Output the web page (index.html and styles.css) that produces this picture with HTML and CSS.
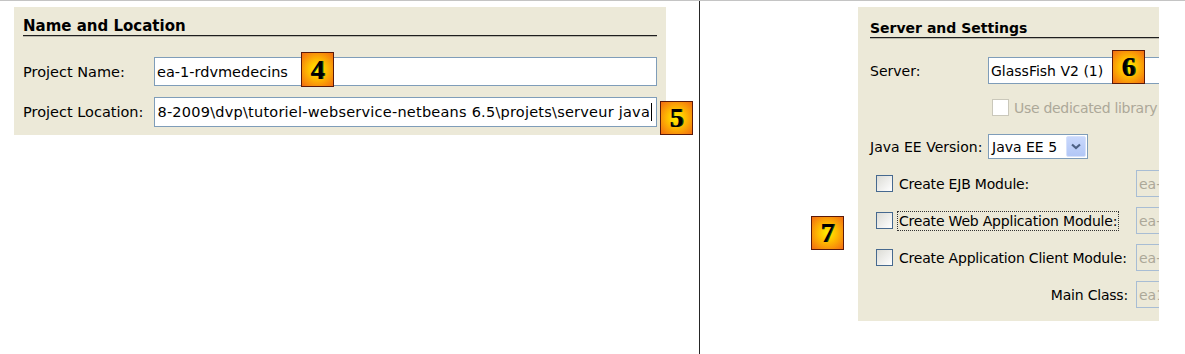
FILE: index.html
```html
<!DOCTYPE html>
<html lang="en">

<head>
    <meta charset="UTF-8">
    <title>New Enterprise Application</title>
    <link rel="stylesheet" href="styles.css">
</head>

<body>

    <div class="topline"></div>

    <div class="page">

        <div class="left">
            <!-- Name and Location -->
            <div class="panel name-panel">
                <div class="heading">Name and Location</div>

                <div class="row row-name">
                    <span class="label">Project Name:</span>
                    <div class="field">ea-1-rdvmedecins</div>
                </div>

                <div class="row row-location">
                    <span class="label">Project Location:</span>
                    <div class="field tail"><span class="path">8-2009\dvp\tutoriel-webservice-netbeans 6.5\projets\serveur java</span><span class="caret"></span></div>
                </div>

                <span class="badge b4">4</span>
                <span class="badge b5">5</span>
            </div>
        </div>

        <div class="divider"></div>

        <div class="right">
            <span class="badge b7">7</span>

            <!-- Server and Settings -->
            <div class="panel server-panel">
                <div class="heading">Server and Settings</div>

                <div class="row row-server">
                    <span class="label">Server:</span>
                    <div class="field wide">GlassFish V2 (1)</div>
                </div>

                <div class="row row-library">
                    <span class="check disabled"></span>
                    <span class="muted">Use dedicated library</span>
                </div>

                <div class="row row-version">
                    <span class="label">Java EE Version:</span>
                    <div class="combo">
                        <span>Java EE 5</span>
                        <span class="combo-btn">
                            <svg width="10" height="7" viewBox="0 0 10 7">
                                <path d="M1 1.5 L5 5 L9 1.5" fill="none" stroke="#4d6185" stroke-width="2.2"/>
                            </svg>
                        </span>
                    </div>
                </div>

                <div class="row module first">
                    <div class="mod"><span class="check"></span><span>Create EJB Module:</span></div>
                    <div class="field off">ea-1-rdvmedecins-ejb</div>
                </div>

                <div class="row module">
                    <div class="mod"><span class="check"></span><span class="focus">Create Web Application Module:</span></div>
                    <div class="field off">ea-1-rdvmedecins-war</div>
                </div>

                <div class="row module">
                    <div class="mod"><span class="check"></span><span>Create Application Client Module:</span></div>
                    <div class="field off">ea-1-rdvmedecins-app-client</div>
                </div>

                <div class="row module">
                    <div class="mod main"><span>Main Class:</span></div>
                    <div class="field off">ea1.Main</div>
                </div>

                <span class="badge b6">6</span>
            </div>
        </div>

    </div>

</body>

</html>
```

FILE: styles.css
```css
body {
    margin: 0;
    background-color: white;
    font-family: "DejaVu Sans", sans-serif;
    font-size: 14.5px;
    color: black;
}

.topline {
    height: 1px;
    background-color: #c4c4c4;
}

.page {
    display: flex;
    min-height: 353px;
}

.left {
    width: 685px;
    padding: 6px 0 0 14px;
}

.divider {
    width: 1px;
    background-color: #262626;
}

.right {
    position: relative;
    flex: 1;
    padding: 6px 0 0 158px;
}

/* panels */

.panel {
    position: relative;
    box-sizing: border-box;
    background-color: #ece9d8;
}

.name-panel {
    width: 652px;
    height: 128px;
    padding: 0 9px;
}

.server-panel {
    width: 301px;
    height: 314px;
    padding-left: 12px;
    overflow: hidden;
    font-size: 14px;
}

.heading {
    padding-top: 10px;
    line-height: 18px;
    font-weight: bold;
    font-size: 15px;
    border-bottom: 1px solid #1e1e1e;
    box-shadow: 0 1px 0 #b9b7aa;
}

.server-panel .heading {
    padding-top: 12px;
    font-size: 14px;
}

.row {
    display: flex;
    align-items: center;
    white-space: nowrap;
}

.label {
    flex: none;
}

.name-panel .label {
    width: 131px;
}

.server-panel .label {
    width: 118px;
}

.row-name {
    margin-top: 21px;
    height: 29px;
}

.row-location {
    margin-top: 11px;
    height: 30px;
}

.row-server {
    margin-top: 19px;
    height: 27px;
}

.row-library {
    margin-top: 15px;
    height: 17px;
    padding-left: 122px;
    gap: 5px;
}

.row-version {
    margin-top: 18px;
    height: 25px;
}

.module {
    margin-top: 9px;
    height: 27px;
}

.module.first {
    margin-top: 11px;
}

.module + .module {
    margin-top: 10px;
}

/* fields */

.field {
    box-sizing: border-box;
    height: 100%;
    flex: 1;
    display: flex;
    align-items: center;
    padding: 0 2px;
    background-color: white;
    border: 1px solid #7f9db9;
    overflow: hidden;
}

.field.tail {
    justify-content: flex-end;
    padding-right: 4px;
}

.path {
    letter-spacing: 0.23px;
}

.caret {
    width: 1px;
    height: 18px;
    margin-left: 1px;
    background-color: black;
}

.field.wide {
    flex: none;
    width: 220px;
}

.field.off {
    flex: none;
    width: 60px;
    background-color: #ece9d8;
    border-color: #a8bdd4;
    color: #aca899;
}

.muted {
    color: #aca899;
    letter-spacing: -0.3px;
}

.combo {
    box-sizing: border-box;
    width: 100px;
    height: 25px;
    display: flex;
    align-items: center;
    justify-content: space-between;
    padding: 0 1px 0 3px;
    background-color: white;
    border: 1px solid #7f9db9;
}

.combo-btn {
    box-sizing: border-box;
    width: 20px;
    height: 21px;
    display: flex;
    align-items: center;
    justify-content: center;
    border: 1px solid #d6e1fb;
    border-radius: 2px;
    background: linear-gradient(#c9d8fc, #b2c7f6);
}

/* checkboxes */

.mod {
    flex: none;
    box-sizing: border-box;
    width: 266px;
    display: flex;
    align-items: center;
    gap: 6px;
    padding-left: 6px;
    letter-spacing: -0.2px;
}

.mod.main {
    justify-content: flex-end;
    padding-right: 8px;
}

.check {
    flex: none;
    box-sizing: border-box;
    width: 17px;
    height: 17px;
    border: 1px solid #46698f;
    background: linear-gradient(135deg, #dcdcd6, #ffffff);
}

.check.disabled {
    border-color: #cac8bb;
    background: white;
}

.focus {
    outline: 1px dotted #333;
    outline-offset: 1px;
}

/* numbered markers */

.badge {
    position: absolute;
    box-sizing: border-box;
    width: 33px;
    height: 34px;
    display: flex;
    align-items: center;
    justify-content: center;
    border: 1px solid #5b1a0a;
    background: radial-gradient(circle at 50% 50%, #fff200 0%, #ffbe00 40%, #f26b12 100%);
    font-family: "Liberation Serif", serif;
    font-weight: bold;
    font-size: 28px;
    line-height: 1;
    letter-spacing: 0;
    color: black;
    text-shadow: 1px 0 0 #1f4a1f;
}

.b4 {
    left: 287px;
    top: 45px;
    height: 35px;
}

.b5 {
    left: 646px;
    top: 94px;
}

.b6 {
    left: 254px;
    top: 43px;
}

.b7 {
    left: 111px;
    top: 215px;
}
```
